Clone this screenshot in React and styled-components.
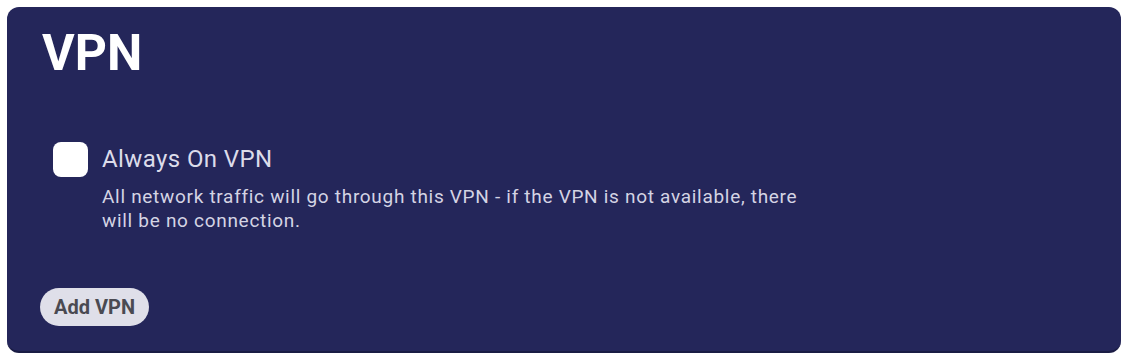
import React from 'react';
import styled, { createGlobalStyle } from 'styled-components';

const GlobalStyle = createGlobalStyle`
	body {
		margin: 0;
		background: #ffffff;
		font-family: Roboto, 'Liberation Sans', sans-serif;
	}
`;

const Page = styled.div`
	padding: 7px 5px 3px 7px;
	height: 356px;
	box-sizing: border-box;
`;

const Card = styled.section`
	background: #24265a;
	border-radius: 12px;
	height: 100%;
	box-sizing: border-box;
	padding: 16px 34px 0 33px;
	display: flex;
	flex-direction: column;
	border-bottom: 2px solid #1a1c44;
`;

const Title = styled.h1`
	margin: 0 0 0 2px;
	font-size: 50px;
	font-weight: 700;
	line-height: 60px;
	color: #ffffff;
`;

const Option = styled.div`
	display: grid;
	grid-template-columns: 35px 1fr;
	column-gap: 14px;
	margin-top: 59px;
	margin-left: 13px;
`;

const Checkbox = styled.span`
	width: 35px;
	height: 35px;
	border-radius: 8px;
	background: #ffffff;
	display: block;
`;

const Label = styled.div`
	color: #dcdcea;
	font-size: 24px;
	letter-spacing: 0.4px;
	line-height: 35px;
`;

const Description = styled.p`
	grid-column: 2;
	margin: 8px 0 0;
	max-width: 710px;
	color: #d4d4e4;
	font-size: 19px;
	letter-spacing: 0.7px;
	line-height: 24px;
`;

const Button = styled.button`
	align-self: flex-start;
	margin-top: 55px;
	height: 38px;
	padding: 0 14px;
	border: none;
	border-radius: 19px;
	background: #dfdfe9;
	color: #4a4a52;
	font-family: Roboto, 'Liberation Sans', sans-serif;
	font-size: 20px;
	font-weight: 700;
	cursor: pointer;
`;

export default function App() {
	return (
		<Page>
			<GlobalStyle />
			<Card>
				<Title>VPN</Title>
				<Option>
					<Checkbox />
					<Label>Always On VPN</Label>
					<Description>
						All network traffic will go through this VPN - if the VPN is not available, there will be no connection.
					</Description>
				</Option>
				<Button>Add VPN</Button>
			</Card>
		</Page>
	);
}
